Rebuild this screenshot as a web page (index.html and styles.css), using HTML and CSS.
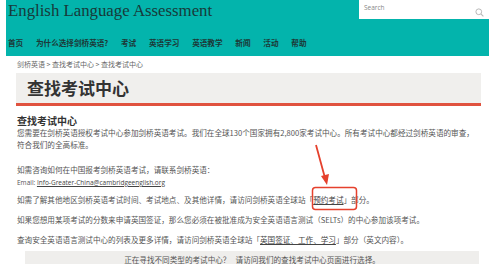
FILE: index.html
```html
<!DOCTYPE html>
<html lang="zh-CN">
<head>
    <meta charset="UTF-8">
    <meta name="viewport" content="width=device-width, initial-scale=1.0">
    <title>查找考试中心 | 剑桥英语</title>
    <link rel="stylesheet" href="styles.css">
</head>
<body>
    <div class="page">
        <header class="site-header">
            <div class="header-top">
                <div class="brand">English Language Assessment</div>
                <div class="search">
                    <span class="search-text">Search</span>
                    <svg class="search-icon" width="9" height="9" viewBox="0 0 10 10">
                        <circle cx="4.2" cy="4.2" r="3.2" fill="none" stroke="#b8b8b8" stroke-width="1.1"/>
                        <line x1="6.6" y1="6.6" x2="9.3" y2="9.3" stroke="#b8b8b8" stroke-width="1.2"/>
                    </svg>
                </div>
            </div>
            <nav class="main-nav">
                <a href="#">首页</a>
                <a href="#">为什么选择剑桥英语?</a>
                <a href="#">考试</a>
                <a href="#">英语学习</a>
                <a href="#">英语教学</a>
                <a href="#">新闻</a>
                <a href="#">活动</a>
                <a href="#">帮助</a>
            </nav>
        </header>

        <main class="content">
            <div class="breadcrumb">剑桥英语 &gt; 查找考试中心 &gt; 查找考试中心</div>
            <h1 class="page-title">查找考试中心</h1>

            <h2 class="section-title">查找考试中心</h2>
            <p class="intro">您需要在剑桥英语授权考试中心参加剑桥英语考试。我们在全球130个国家拥有2,800家考试中心。所有考试中心都经过剑桥英语的审查，符合我们的全高标准。</p>
            <p class="contact">如需咨询如何在中国报考剑桥英语考试，请联系剑桥英语：<br>
                <span class="email">Email: <a href="#">Info-Greater-China@cambridgeenglish.org</a></span></p>
            <p>如需了解其他地区剑桥英语考试时间、考试地点、及其他详情，请访问剑桥英语全球站「<a href="#">预约考试</a>」部分。</p>
            <p>如果您想用某项考试的分数来申请英国签证，那么您必须在被批准成为安全英语语言测试（SELTs）的中心参加该项考试。</p>
            <p class="last">查询安全英语语言测试中心的列表及更多详情，请访问剑桥英语全球站「<a href="#">英国签证、工作、学习</a>」部分（英文内容）。</p>

            <div class="finder-box">正在寻找不同类型的考试中心？&nbsp;&nbsp;&nbsp;请访问我们的查找考试中心页面进行选择。</div>
        </main>

        <!-- annotation drawn over the screenshot -->
        <svg class="annotation" width="493" height="264" viewBox="0 0 493 264">
            <line x1="316" y1="145" x2="325" y2="178" stroke="#e5412d" stroke-width="1.8"/>
            <polygon points="321,176 329,174 327,185" fill="#e5412d"/>
            <rect x="312.5" y="187.5" width="44" height="22" rx="3" fill="none" stroke="#e5412d" stroke-width="1.5"/>
        </svg>
    </div>
</body>
</html>
```

FILE: styles.css
```css
body {
    margin: 0;
    background: #fff;
    font-family: "Noto Sans CJK SC", "Noto Sans", sans-serif;
    color: #555;
    overflow: hidden;
}
.page {
    position: relative;
    width: 493px;
    height: 264px;
    overflow: hidden;
}
.site-header {
    margin: 0 4px 0 6px;
    height: 56px;
    background: #03b4ac;
}
.header-top {
    display: flex;
    justify-content: space-between;
    height: 30px;
}
.brand {
    font-family: "Liberation Serif", serif;
    font-size: 16.8px;
    line-height: 20px;
    padding: 1px 0 0 2px;
    color: #173a3a;
}
.search {
    width: 130px;
    height: 19px;
    background: #fff;
    display: flex;
    justify-content: space-between;
    align-items: center;
    box-sizing: border-box;
    padding: 0 5px 0 5px;
}
.search-text {
    font-family: "Open Sans", sans-serif;
    font-size: 6.5px;
    color: #888;
    margin-top: -4px;
}
.search-icon {
    margin-top: 6px;
}
.main-nav {
    display: flex;
    gap: 12.8px;
    padding: 8px 0 0 2px;
}
.main-nav a {
    font-size: 7.6px;
    line-height: 10px;
    color: #1d3837;
    text-decoration: none;
    font-weight: bold;
}
.content {
    padding: 3px 12px 0 16px;
}
.breadcrumb {
    font-size: 7px;
    line-height: 10px;
    color: #666;
    padding-left: 1px;
}
.page-title {
    margin: 4px 0 0 0;
    height: 30px;
    background: #f0efed;
    border-bottom: 3px solid #e0523f;
    font-size: 17px;
    line-height: 30px;
    padding-left: 11px;
    color: #333;
    font-weight: bold;
}
.section-title {
    margin: 9px 0 0 1px;
    font-size: 10px;
    line-height: 12px;
    color: #333;
}
.content p {
    margin: 0 0 8px 1px;
    font-size: 7.6px;
    line-height: 12px;
    color: #555;
}
.content p.intro {
    margin-bottom: 13px;
}
.content p.contact {
    margin-bottom: 5px;
}
.content p.last {
    margin-bottom: 5px;
}
.content p a {
    color: #444;
    text-decoration: underline;
}
.email {
    font-family: "Open Sans", sans-serif;
    font-size: 6.5px;
}
.finder-box {
    margin: 0 2px 0 9px;
    background: #efeeec;
    padding: 3px 0 2px;
    text-align: center;
    font-size: 7.6px;
    line-height: 12px;
    color: #555;
}
.annotation {
    position: absolute;
    left: 0;
    top: 0;
}
```
